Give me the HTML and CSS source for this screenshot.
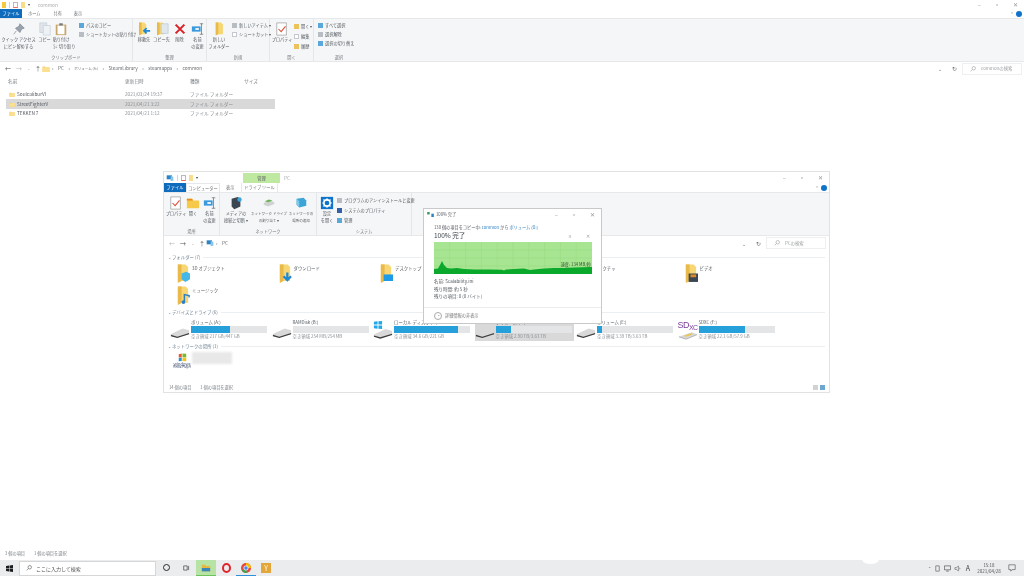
FILE: index.html
```html
<!DOCTYPE html>
<html lang="ja">
<head>
    <meta charset="UTF-8">
    <title>common</title>
    <link rel="stylesheet" href="styles.css">
</head>
<body>
    <svg class="defs" width="0" height="0">
        <symbol id="folder" viewBox="0 0 16 16"><path d="M1 3h5l1 1.500h8V14H1z" fill="#f5cf6b"/><path d="M1 5h6l1-1h7v10H1z" fill="#fbe08f"/></symbol>
        <symbol id="tall" viewBox="0 0 16 20"><path d="M3 0h8l3 3v15H3z" fill="#f7d774"/><path d="M3 0h4v18l-4 2z" fill="#e9b949"/></symbol>
        <symbol id="drive" viewBox="0 0 22 12"><path d="M1 7 14 1l7 2v4L8 11 1 9z" fill="#d9d9d9"/><path d="M1 8l7 2 13-4v1.500L8 11.500 1 9.500z" fill="#3d3d3d"/></symbol>
        <symbol id="copy" viewBox="0 0 16 16"><path d="M2 1h8v11H2z" fill="#dfe5ea" stroke="#b9c6d1" stroke-width=".6"/><path d="M6 4h8v11H6z" fill="#eef2f5" stroke="#b9c6d1" stroke-width=".6"/></symbol>
        <symbol id="check" viewBox="0 0 16 16"><path d="M2 1h11v14H2z" fill="#fff" stroke="#999" stroke-width=".8"/><path d="M4 8l3 3 5-6" fill="none" stroke="#e0503a" stroke-width="1.200"/></symbol>
        <symbol id="rename" viewBox="0 0 16 16"><path d="M1 5h10v6H1z" fill="#3a9bdc"/><path d="M5 7h4v2H5z" fill="#fff"/><path d="M12 2v12M10 2h4M10 14h4" stroke="#666" fill="none" stroke-width=".8"/></symbol>
        <symbol id="harddisk-net" viewBox="0 0 16 16"><path d="M2 8l7-3 5 2v2l-7 3-5-2z" fill="#cfd3d0"/><path d="M3 6l5-2 4 1-5 2z" fill="#6fb35a"/></symbol>
        <symbol id="netplace" viewBox="0 0 16 16"><path d="M3 3l8-1 3 3v6l-8 2-3-3z" fill="#3da4d8"/><path d="M3 3l3 3v7l-3-3z" fill="#7cc8ea"/></symbol>
        <symbol id="pc" viewBox="0 0 12 12"><path d="M1 2h8v6H1z" fill="#2b83c6"/><path d="M7 3l4 1v6l-4 1z" fill="#8bc6ea"/></symbol>
        <symbol id="lens" viewBox="0 0 8 8"><circle cx="5" cy="3" r="2.300" fill="none" stroke="currentColor" stroke-width=".8"/><path d="M3.300 4.700.8 7.200" stroke="currentColor" stroke-width=".8"/></symbol>
    </svg>

    <div class="screen">
        <!-- 後ろのウィンドウ -->
        <main class="window-main">
            <div class="title-row">
                <div class="quick-icons">
                    <span class="q-folder"></span><span class="q-sep"></span><span class="q-note"></span><span class="q-folder light"></span><span class="q-down">▾</span>
                </div>
                <span class="title-text">common</span>
                <div class="win-controls">
                    <span>–</span><span>▫</span><span>✕</span>
                </div>
            </div>
            <div class="tab-row">
                <span class="tab file">ファイル</span>
                <span class="tab home">ホーム</span>
                <span class="tab share">共有</span>
                <span class="tab view">表示</span>
                <div class="help"><span class="caret">⌃</span><span class="help-dot"></span></div>
            </div>
            <div class="ribbon">
                <section class="group g-clip">
                    <div class="group-body">
                        <div class="big"><svg class="ico16" viewBox="0 0 16 16"><path d="M9 2l5 5-3 1-2 4-5-5 4-2zM5 10l-3 4" fill="#9aa4ad" stroke="#7d8790" stroke-width=".8"/></svg><p>クイック アクセス<br>にピン留めする</p></div>
                        <div class="big"><svg class="ico16"><use href="#copy"/></svg><p>コピー</p></div>
                        <div class="big"><svg class="ico16" viewBox="0 0 16 16"><path d="M2 3h12v12H2z" fill="#c9a56a"/><path d="M4 4h8v10H4z" fill="#fff"/><path d="M6 1.500h4V4H6z" fill="#777"/></svg><p>貼り付け<br><span class="cut">✂ 切り取り</span></p></div>
                        <ul class="small-list">
                            <li><i class="mini blue"></i>パスのコピー</li>
                            <li><i class="mini grey"></i>ショートカットの貼り付け</li>
                        </ul>
                    </div>
                    <h4>クリップボード</h4>
                </section>
                <section class="group g-org">
                    <div class="group-body">
                        <div class="big"><svg class="ico16" viewBox="0 0 16 16"><use href="#tall" width="12" height="16"/><path d="M15 10H8M11 7l-3 3 3 3" stroke="#1e88d8" stroke-width="2" fill="none"/></svg><p>移動先</p></div>
                        <div class="big"><svg class="ico16" viewBox="0 0 16 16"><use href="#tall" width="12" height="16"/><path d="M7 2h8v11H7z" fill="#dfe8ef" stroke="#a9bccb" stroke-width=".6"/></svg><p>コピー先</p></div>
                        <div class="big"><svg class="ico16" viewBox="0 0 16 16"><path d="M3 3l10 10M13 3L3 13" stroke="#d8232a" stroke-width="2.400"/></svg><p>削除</p></div>
                        <div class="big"><svg class="ico16"><use href="#rename"/></svg><p>名前<br>の変更</p></div>
                    </div>
                    <h4>整理</h4>
                </section>
                <section class="group g-new">
                    <div class="group-body">
                        <div class="big"><svg class="ico16" viewBox="0 0 16 16"><use href="#tall" x="2" width="12" height="16"/></svg><p>新しい<br>フォルダー</p></div>
                        <ul class="small-list">
                            <li><i class="mini grey"></i>新しいアイテム ▾</li>
                            <li><i class="mini white"></i>ショートカット ▾</li>
                        </ul>
                    </div>
                    <h4>新規</h4>
                </section>
                <section class="group g-open">
                    <div class="group-body">
                        <div class="big"><svg class="ico16"><use href="#check"/></svg><p>プロパティ</p></div>
                        <ul class="small-list tall">
                            <li><i class="mini yellow"></i>開く ▾</li>
                            <li><i class="mini white"></i>編集</li>
                            <li><i class="mini yellow"></i>履歴</li>
                        </ul>
                    </div>
                    <h4>開く</h4>
                </section>
                <section class="group g-sel">
                    <div class="group-body">
                        <ul class="small-list">
                            <li><i class="mini blue"></i>すべて選択</li>
                            <li><i class="mini grey"></i>選択解除</li>
                            <li><i class="mini blue"></i>選択の切り替え</li>
                        </ul>
                    </div>
                    <h4>選択</h4>
                </section>
            </div>
            <div class="address">
                <div class="nav"><span>←</span><span class="off">→</span><span class="off tiny">⌄</span><span>↑</span></div>
                <svg class="ico8"><use href="#folder"/></svg>
                <div class="crumbs">
                    <span>›</span><span>PC</span><span>›</span><span class="crumb-jp">ボリューム (A:)</span><span>›</span><span>SteamLibrary</span><span>›</span><span>steamapps</span><span>›</span><span>common</span>
                </div>
                <span class="addr-drop">⌄</span>
                <span class="addr-refresh">↻</span>
                <div class="search-box"><svg class="lens"><use href="#lens"/></svg>commonの検索</div>
            </div>
            <div class="file-list">
                <div class="file-row head"><span>名前</span><span>更新日時</span><span>種類</span><span>サイズ</span></div>
                <div class="file-row"><span class="fname"><svg class="ico6"><use href="#folder"/></svg>SoulcaliburVI</span><span class="dim">2021/03/24 19:37</span><span class="dim">ファイル フォルダー</span></div>
                <div class="file-row selected"><span class="fname"><svg class="ico6"><use href="#folder"/></svg>StreetFighterV</span><span class="dim">2021/04/21 3:22</span><span class="dim">ファイル フォルダー</span></div>
                <div class="file-row"><span class="fname"><svg class="ico6"><use href="#folder"/></svg>TEKKEN 7</span><span class="dim">2021/04/21 1:12</span><span class="dim">ファイル フォルダー</span></div>
            </div>
            <div class="status-main">3 個の項目<span>1 個の項目を選択</span></div>
        </main>

        <!-- PC ウィンドウ -->
        <div class="window-pc">
            <div class="title-row pc-title">
                <div class="quick-icons">
                    <svg class="ico8"><use href="#pc"/></svg><span class="q-sep"></span><span class="q-note"></span><span class="q-folder light"></span><span class="q-down">▾</span>
                </div>
                <span class="manage">管理</span>
                <span class="title-text">PC</span>
                <div class="win-controls pc-controls">
                    <span>–</span><span>▫</span><span>✕</span>
                </div>
            </div>
            <div class="tab-row pc-tabs">
                <span class="tab file">ファイル</span>
                <span class="tab active">コンピューター</span>
                <span class="tab">表示</span>
                <span class="tab drive-tool">ドライブ ツール</span>
                <div class="help"><span class="caret">⌃</span><span class="help-dot"></span></div>
            </div>
            <div class="ribbon pc-ribbon">
                <section class="group g-place">
                    <div class="group-body">
                        <div class="big"><svg class="ico16"><use href="#check"/></svg><p>プロパティ</p></div>
                        <div class="big"><svg class="ico16" viewBox="0 0 16 16"><path d="M1 3h6l1 2h7v9H1z" fill="#f7c948"/><path d="M1 3h6l1 2H1z" fill="#e88a1a"/></svg><p>開く</p></div>
                        <div class="big"><svg class="ico16"><use href="#rename"/></svg><p>名前<br>の変更</p></div>
                    </div>
                    <h4>場所</h4>
                </section>
                <section class="group g-net">
                    <div class="group-body">
                        <div class="big"><svg class="ico16" viewBox="0 0 16 16"><path d="M3 3l7-2 3 2v9l-7 3-3-3z" fill="#3b4650"/><circle cx="12" cy="4" r="2.500" fill="#3da4d8"/></svg><p>メディアの<br>接続と切断 ▾</p></div>
                        <div class="big tight"><svg class="ico16"><use href="#harddisk-net"/></svg><p>ネットワーク ドライブ<br>の割り当て ▾</p></div>
                        <div class="big tight"><svg class="ico16"><use href="#netplace"/></svg><p>ネットワークの<br>場所の追加</p></div>
                    </div>
                    <h4>ネットワーク</h4>
                </section>
                <section class="group g-sys">
                    <div class="group-body">
                        <div class="big"><svg class="ico16" viewBox="0 0 16 16"><path d="M1 1h14v14H1z" fill="#0f74c9"/><circle cx="8" cy="8" r="3.600" fill="none" stroke="#fff" stroke-width="1.800"/><path d="M8 2.500v2M8 11.500v2M2.500 8h2M11.500 8h2M4 4l1.400 1.400M10.600 10.600L12 12M12 4l-1.400 1.400M5.400 10.600L4 12" stroke="#fff" stroke-width="1.300"/></svg><p>設定<br>を開く</p></div>
                        <ul class="small-list tall">
                            <li><i class="mini grey"></i>プログラムのアンインストールと変更</li>
                            <li><i class="mini navy"></i>システムのプロパティ</li>
                            <li><i class="mini blue"></i>管理</li>
                        </ul>
                    </div>
                    <h4>システム</h4>
                </section>
            </div>
            <div class="address pc-address">
                <div class="nav"><span class="off">←</span><span>→</span><span class="off tiny">⌄</span><span>↑</span></div>
                <svg class="ico8"><use href="#pc"/></svg>
                <div class="crumbs"><span>›</span><span>PC</span></div>
                <span class="addr-drop">⌄</span>
                <span class="addr-refresh">↻</span>
                <div class="search-box pc-search"><svg class="lens"><use href="#lens"/></svg>PCの検索</div>
            </div>
            <div class="pc-content">
                <div class="section-head"><span>⌄ フォルダー (7)</span></div>
                <div class="tile-grid folders">
                    <div class="folder-tile"><svg class="ico-tall" viewBox="0 0 16 20"><use href="#tall"/><path d="M7 10l5-2 4 2v6l-5 3-4-3z" fill="#43b7e6"/></svg><span>3D オブジェクト</span></div>
                    <div class="folder-tile"><svg class="ico-tall" viewBox="0 0 16 20"><use href="#tall"/><path d="M11 9v6M7 13l4 4 4-4" stroke="#1e88d8" stroke-width="2.400" fill="none"/></svg><span>ダウンロード</span></div>
                    <div class="folder-tile"><svg class="ico-tall" viewBox="0 0 16 20"><use href="#tall"/><path d="M6 11h10v7H6z" fill="#1e9be8"/></svg><span>デスクトップ</span></div>
                    <div class="folder-tile"><svg class="ico-tall" viewBox="0 0 16 20"><use href="#tall"/></svg><span>ドキュメント</span></div>
                    <div class="folder-tile"><svg class="ico-tall" viewBox="0 0 16 20"><use href="#tall"/></svg><span>ピクチャ</span></div>
                    <div class="folder-tile"><svg class="ico-tall" viewBox="0 0 16 20"><use href="#tall"/><path d="M6 10h10v9H6z" fill="#3a4652"/><path d="M8 11h6v3H8z" fill="#d98a2b"/></svg><span>ビデオ</span></div>
                    <div class="folder-tile"><svg class="ico-tall" viewBox="0 0 16 20"><use href="#tall"/><path d="M10 17V9l5 1v2" stroke="#2c7fc4" stroke-width="1.600" fill="none"/><circle cx="9" cy="17" r="2" fill="#2c7fc4"/></svg><span>ミュージック</span></div>
                </div>
                <div class="section-head"><span>⌄ デバイスとドライブ (6)</span></div>
                <div class="tile-grid drives">
                    <div class="drive-tile">
                        <svg class="ico-drive"><use href="#drive"/></svg>
                        <div class="drive-info"><span>ボリューム (A:)</span><div class="bar"><div class="fill" style="width:51%"></div></div><span class="dim">空き領域 217 GB/447 GB</span></div>
                    </div>
                    <div class="drive-tile">
                        <svg class="ico-drive"><use href="#drive"/></svg>
                        <div class="drive-info"><span>RAMDisk (B:)</span><div class="bar"><div class="fill" style="width:0%"></div></div><span class="dim">空き領域 254 MB/254 MB</span></div>
                    </div>
                    <div class="drive-tile">
                        <svg class="ico-drive winlogo" viewBox="0 0 22 20"><path d="M1 1l4-.6V4H1zM6 .3 10 0v4H6zM1 5h4v3.500L1 8zM6 5h4v4l-4-.5z" fill="#22a7e8"/><use href="#drive" y="8" width="22" height="12"/></svg>
                        <div class="drive-info"><span>ローカル ディスク (C:)</span><div class="bar"><div class="fill" style="width:84%"></div></div><span class="dim">空き領域 34.6 GB/221 GB</span></div>
                    </div>
                    <div class="drive-tile picked">
                        <svg class="ico-drive"><use href="#drive"/></svg>
                        <div class="drive-info"><span>ボリューム (D:)</span><div class="bar"><div class="fill" style="width:20%"></div></div><span class="dim">空き領域 2.90 TB/3.63 TB</span></div>
                    </div>
                    <div class="drive-tile">
                        <svg class="ico-drive"><use href="#drive"/></svg>
                        <div class="drive-info"><span>ボリューム (E:)</span><div class="bar"><div class="fill" style="width:7%"></div></div><span class="dim">空き領域 3.39 TB/3.63 TB</span></div>
                    </div>
                    <div class="drive-tile">
                        <div class="sdxc"><b>SD<small>XC</small></b><svg class="sd-card" viewBox="0 0 22 9"><path d="M1 6l14-5 6 2-12 5z" fill="#d5d9dd"/><path d="M6 5l8-3 3 1-8 3z" fill="#e8c659"/><path d="M1 6l8 2.500 12-5" stroke="#777" stroke-width=".6" fill="none"/></svg></div>
                        <div class="drive-info"><span>SDXC (F:)</span><div class="bar"><div class="fill" style="width:61%"></div></div><span class="dim">空き領域 22.1 GB/57.9 GB</span></div>
                    </div>
                </div>
                <div class="section-head"><span>⌄ ネットワークの場所 (1)</span></div>
                <div class="net-item">
                    <div class="media-logo"><svg viewBox="0 0 12 11" class="flag"><path d="M1 1l4-1v5l-4 .5z" fill="#e8542c"/><path d="M6 0l5 .5v5L6 5z" fill="#7cb82f"/><path d="M1 6l4-.5V10l-4 .5z" fill="#2b8fd8"/><path d="M6 5.500l5 .5v4.500L6 10z" fill="#f5c11d"/></svg><span>Windows</span><em>Media Player</em></div>
                    <div class="net-name"></div>
                </div>
            </div>
            <div class="status-pc">
                <span>14 個の項目</span><span>1 個の項目を選択</span>
                <div class="view-btns"><i class="vb list"></i><i class="vb tile"></i></div>
            </div>
        </div>

        <!-- コピーのダイアログ -->
        <div class="dialog">
            <div class="dlg-title">
                <svg class="dlg-icon" viewBox="0 0 8 6"><path d="M0 0h3v3H0z" fill="#3c9a5f"/><path d="M5 2h3v4H5z" fill="#2b83c6"/></svg>
                <span>100% 完了</span>
                <div class="dlg-controls"><span>–</span><span>▫</span><span>✕</span></div>
            </div>
            <p class="dlg-line">130 個の項目をコピー中: <a>common</a> から <a>ボリューム (D:)</a></p>
            <div class="dlg-progress">
                <span>100% 完了</span>
                <div class="dlg-actions"><span>ıı</span><span>✕</span></div>
            </div>
            <div class="graph">
                <svg viewBox="0 0 158 32" width="158" height="32">
                    <rect width="158" height="32" fill="#a8e592"/>
                    <path d="M15.800 0v32M31.600 0v32M47.400 0v32M63.200 0v32M79 0v32M94.800 0v32M110.600 0v32M126.400 0v32M142.200 0v32M0 8h158M0 16h158M0 24h158" stroke="#95da7e" stroke-width=".5"/>
                    <path d="M0 32V27L4 26.500 6 23 8 19 10 23 13 26 17 26.500 23 26 30 27 40 27.500 55 27.500 68 27.800 70 28.500 72 27.500 80 27 90 26.500 96 28 100 27.500 110 26.500 120 26 130 26 140 25.500 158 25V32z" fill="#0aa82b"/>
                </svg>
                <span class="speed">速度: 134 MB/秒</span>
            </div>
            <ul class="dlg-details">
                <li>名前: Scalability.ini</li>
                <li>残り時間: 約 5 秒</li>
                <li>残りの項目: 0 (0 バイト)</li>
            </ul>
            <div class="dlg-footer"><span class="circle">⌃</span>詳細情報の非表示</div>
        </div>

        <div class="bump"></div>

        <!-- タスクバー -->
        <footer class="taskbar">
            <svg class="start" viewBox="0 0 10 10"><path d="M0 1.300 4.300.7v3.900H0zM5 .6 10 0v4.600H5zM0 5.300h4.300v3.900L0 8.700zM5 5.300h5V10l-5-.7z" fill="#1c1c1c"/></svg>
            <div class="task-search"><svg class="lens"><use href="#lens"/></svg>ここに入力して検索</div>
            <div class="task-icons">
                <div class="task-btn"><span class="cortana"></span></div>
                <div class="task-btn"><svg class="tv" viewBox="0 0 10 8"><path d="M1 1h5v6H1zM8 1v6" fill="none" stroke="#333" stroke-width=".9"/></svg></div>
                <div class="task-btn running"><svg class="app" viewBox="0 0 12 10"><path d="M1 1h4l1 1.500h5V9H1z" fill="#e8b73e"/><path d="M1 5h10v4H1z" fill="#3c86b8"/></svg></div>
                <div class="task-btn"><span class="opera"></span></div>
                <div class="task-btn used"><svg class="app" viewBox="0 0 12 12"><circle cx="6" cy="6" r="6" fill="#e8453c"/><path d="M6 6 1 9a6 6 0 0 0 6 3z" fill="#34a853"/><path d="M6 0a6 6 0 0 1 6 6H6z" fill="#fbbc05"/><circle cx="6" cy="6" r="2.600" fill="#4285f4" stroke="#fff" stroke-width=".9"/></svg></div>
                <div class="task-btn"><span class="yellow-app">Y</span></div>
            </div>
            <div class="tray">
                <span>⌃</span>
                <svg class="tray-ico" viewBox="0 0 8 8"><path d="M2 1h4v6H2z" fill="none" stroke="#666" stroke-width=".8"/></svg>
                <svg class="tray-ico" viewBox="0 0 8 8"><path d="M.5 1h7v4.500h-7zM2.500 7h3" fill="none" stroke="#555" stroke-width=".8"/></svg>
                <svg class="tray-ico" viewBox="0 0 8 8"><path d="M1 3h2l2-2v6L3 5H1zM6 3c1 .6 1 1.400 0 2" fill="none" stroke="#666" stroke-width=".7"/></svg>
                <span class="ime">A</span>
                <div class="clock"><span>15:18</span><span>2021/04/28</span></div>
                <svg class="notify" viewBox="0 0 10 10"><path d="M1 1h8v6H5L3.500 9V7H1z" fill="none" stroke="#555" stroke-width=".8"/></svg>
            </div>
        </footer>
    </div>
</body>
</html>
```
FILE: styles.css
```css
* {
    margin: 0;
    padding: 0;
    box-sizing: border-box;
}

html, body {
    width: 1024px;
    height: 576px;
    overflow: hidden;
    background-color: #ffffff;
}

body {
    color: #555b61;
    font-family: "Noto Sans CJK JP", "Noto Sans", sans-serif;
    font-size: 4.200px;
    line-height: 7px;
}

ul {
    list-style: none;
}

.defs {
    position: absolute;
}

.screen {
    position: relative;
    width: 1024px;
    height: 576px;
    display: flex;
    flex-direction: column;
    filter: blur(0.4px);
}

.dim {
    color: #8a8f94;
}

.ico16 {
    width: 14px;
    height: 14px;
    display: block;
}

.ico8 {
    width: 8px;
    height: 8px;
    flex: none;
}

.ico6 {
    width: 6px;
    height: 7px;
    flex: none;
}

.lens {
    width: 6px;
    height: 6px;
    flex: none;
}

/* 後ろのウィンドウ */
.window-main {
    flex: 1;
    display: flex;
    flex-direction: column;
}

.title-row {
    height: 9px;
    display: flex;
    align-items: center;
    padding-left: 2px;
    flex: none;
}

.quick-icons {
    display: flex;
    align-items: center;
    gap: 3px;
    width: 36px;
}

.q-folder {
    width: 4px;
    height: 6px;
    background-color: #f5c83f;
}

.q-folder.light {
    background-color: #f8de8c;
}

.q-sep {
    width: 1px;
    height: 6px;
    background-color: #d5d5d5;
}

.q-note {
    width: 5px;
    height: 6px;
    border: 1px solid #b9b9b9;
    border-bottom-color: #e0705a;
}

.q-down {
    font-size: 4px;
    color: #444;
}

.title-text {
    color: #a9adb1;
    font-size: 4.800px;
}

.win-controls {
    margin-left: auto;
    display: flex;
    gap: 13px;
    padding-right: 6px;
    font-size: 6px;
    color: #9a9a9a;
}

.tab-row {
    height: 9px;
    display: flex;
    align-items: center;
    flex: none;
    position: relative;
    color: #6a6f74;
}

.tab {
    height: 9px;
    line-height: 9px;
}

.tab.file {
    width: 22px;
    background-color: #0f6cbd;
    color: #ffffff;
    text-align: center;
}

.tab.home {
    margin-left: 6px;
}

.tab.share {
    margin-left: 13px;
}

.tab.view {
    margin-left: 12px;
}

.help {
    margin-left: auto;
    display: flex;
    align-items: center;
    gap: 2px;
    padding-right: 2px;
}

.caret {
    font-size: 5px;
    color: #999;
}

.help-dot {
    width: 6px;
    height: 6px;
    border-radius: 50%;
    background-color: #0f74c9;
}

.ribbon {
    height: 44px;
    flex: none;
    display: flex;
    background-color: #f5f6f7;
    border-top: 1px solid #e6e8ea;
    border-bottom: 1px solid #e6e8ea;
}

.group {
    display: flex;
    flex-direction: column;
    height: 100%;
    border-right: 1px solid #e4e6e8;
}

.group-body {
    flex: 1;
    display: grid;
    padding-top: 3px;
    align-items: start;
}

.group h4 {
    font-weight: 400;
    font-size: 4.200px;
    text-align: center;
    color: #777c81;
    height: 7px;
    line-height: 6px;
}

.big {
    display: flex;
    flex-direction: column;
    align-items: center;
    white-space: nowrap;
    text-align: center;
}

.big p {
    line-height: 7px;
}

.big.tight {
    font-size: 3.500px;
}

.cut {
    margin-left: 7px;
}

.small-list {
    margin-top: -1px;
}

.small-list li {
    display: flex;
    align-items: center;
    gap: 2px;
    height: 9px;
    white-space: nowrap;
}

.small-list.tall li {
    height: 10px;
}

.mini {
    width: 5px;
    height: 5px;
    flex: none;
}

.mini.blue {
    background-color: #5aa7dc;
}

.mini.grey {
    background-color: #b7bdc2;
}

.mini.white {
    background-color: #ffffff;
    border: 1px solid #c2c8cd;
}

.mini.yellow {
    background-color: #ecc35a;
}

.mini.navy {
    background-color: #3560a8;
}

.g-clip {
    width: 133px;
}

.g-clip .group-body {
    grid-template-columns: 35px 17px 16px 1fr;
    padding-left: 1px;
}

.g-clip .small-list {
    padding-left: 10px;
}

.g-org {
    width: 74px;
}

.g-org .group-body {
    grid-template-columns: 18px 17px 19px 17px;
    padding-left: 2px;
}

.g-new {
    width: 63px;
}

.g-new .group-body {
    grid-template-columns: 24px 1fr;
}

.g-new .small-list {
    padding-left: 1px;
}

.g-open {
    width: 44px;
}

.g-open .group-body {
    grid-template-columns: 24px 1fr;
}

.g-sel {
    width: 50px;
    border-right: none;
}

.g-sel .small-list {
    padding-left: 4px;
}

.address {
    height: 13px;
    flex: none;
    display: flex;
    align-items: center;
    color: #666b70;
    padding-left: 5px;
    font-size: 4.700px;
}

.nav {
    display: flex;
    width: 37px;
    font-size: 6px;
    color: #555;
    gap: 5px;
}

.nav .off {
    color: #b5b5b5;
}

.nav .tiny {
    font-size: 4px;
}

.crumbs {
    display: flex;
    gap: 4.500px;
    margin-left: 2px;
}

.crumb-jp {
    font-size: 3.500px;
}

.addr-drop {
    margin-left: auto;
    font-size: 5px;
    width: 14px;
}

.addr-refresh {
    font-size: 6px;
    width: 10px;
}

.search-box {
    width: 60px;
    height: 12px;
    margin-right: 2px;
    border: 1px solid #edeff0;
    display: flex;
    align-items: center;
    gap: 5px;
    padding-left: 7px;
    color: #9a9ea2;
    font-size: 4.400px;
}

.file-list {
    flex: 1;
    padding: 1px 0 0 6px;
    font-size: 4.700px;
}

.file-row {
    display: grid;
    grid-template-columns: 119px 65px 54px 31px;
    width: 269px;
    height: 9px;
    align-items: center;
    white-space: nowrap;
}

.file-row.head {
    height: 10px;
    margin-bottom: 4px;
    color: #7b8086;
}

.file-row.head span:first-child {
    padding-left: 2px;
}

.file-row.selected {
    background-color: #d9d9d9;
    height: 10px;
}

.fname {
    display: flex;
    align-items: center;
    gap: 2px;
    padding-left: 3px;
}

.status-main {
    height: 7px;
    flex: none;
    padding-left: 5px;
    margin-bottom: 3px;
    color: #7b8086;
}

.status-main span {
    margin-left: 9px;
}

/* PC ウィンドウ */
.window-pc {
    position: absolute;
    left: 163px;
    top: 171px;
    width: 667px;
    height: 222px;
    background-color: #ffffff;
    border: 1px solid #e2e2e2;
    display: flex;
    flex-direction: column;
}

.pc-title {
    height: 11px;
}

.pc-title .quick-icons {
    width: 77px;
}

.manage {
    width: 37px;
    height: 10px;
    background-color: #bfe8a0;
    text-align: center;
    line-height: 10px;
    margin-right: 4px;
}

.pc-controls {
    gap: 13px;
    padding-right: 6px;
}

.pc-tabs .tab.active {
    width: 34px;
    text-align: center;
    background-color: #ffffff;
    border: 1px solid #e6e8ea;
    border-bottom: none;
}

.pc-tabs .tab:nth-child(3) {
    margin-left: 6px;
    width: 11px;
}

.pc-tabs .drive-tool {
    margin-left: 4px;
    width: 37px;
    text-align: center;
    border: 1px solid #e6e8ea;
    border-top: none;
    border-bottom: none;
}

.pc-ribbon {
    height: 44px;
}

.g-place {
    width: 56px;
}

.g-place .group-body {
    grid-template-columns: 18px 16px 17px;
    padding-left: 3px;
}

.g-net {
    width: 97px;
}

.g-net .group-body {
    grid-template-columns: 32px 34px 30px;
}

.g-sys {
    width: 95px;
}

.g-sys .group-body {
    grid-template-columns: 20px 1fr;
}

.pc-address {
    padding-left: 5px;
    height: 14px;
}

.pc-search {
    width: 60px;
    margin-right: 3px;
}

.pc-content {
    flex: 1;
    padding-top: 3px;
    font-size: 4.400px;
}

.section-head {
    display: flex;
    align-items: center;
    gap: 3px;
    height: 8px;
    padding: 0 4px;
    color: #6d7f90;
}

.section-head::after {
    content: "";
    flex: 1;
    height: 1px;
    background-color: #eceff1;
}

.tile-grid {
    display: grid;
    grid-template-columns: repeat(6, 101.500px);
    padding-left: 6px;
}

.folders {
    grid-auto-rows: 22px;
    padding-top: 3px;
}

.folder-tile {
    display: flex;
    gap: 2px;
    padding-left: 5px;
    align-items: flex-start;
}

.ico-tall {
    width: 15px;
    height: 19px;
    flex: none;
}

.folder-tile span {
    margin-top: 1px;
}

.drives {
    height: 26px;
    padding-top: 2px;
}

.drive-tile {
    display: flex;
    align-items: center;
    gap: 1px;
    height: 23px;
}

.drive-tile.picked {
    background-color: #d9d9d9;
    width: 99px;
}

.ico-drive {
    width: 20px;
    height: 12px;
    flex: none;
    margin-top: 6px;
}

.ico-drive.winlogo {
    height: 20px;
    margin-top: 0;
}

.drive-info {
    flex: none;
    width: 77px;
    display: flex;
    flex-direction: column;
    white-space: nowrap;
}

.bar {
    width: 76px;
    height: 7px;
    background-color: #e4e5e6;
}

.fill {
    height: 100%;
    background-color: #26a0da;
}

.sdxc {
    width: 20px;
    flex: none;
    display: flex;
    flex-direction: column;
    align-items: center;
    white-space: nowrap;
}

.sdxc b {
    color: #7b3f98;
    font-family: "Liberation Sans", sans-serif;
    font-weight: 400;
    font-size: 9px;
    line-height: 10px;
    letter-spacing: -0.5px;
}

.sdxc small {
    font-size: 7px;
    position: relative;
    top: 2px;
}

.sd-card {
    width: 20px;
    height: 9px;
}

.net-item {
    display: flex;
    padding: 1px 0 0 8px;
}

.media-logo {
    width: 20px;
    display: flex;
    flex-direction: column;
    align-items: center;
    font-size: 4px;
    line-height: 4px;
    color: #3b4a6b;
    padding-top: 2px;
}

.media-logo em {
    font-style: normal;
    font-size: 3px;
    line-height: 3px;
}

.flag {
    width: 9px;
    height: 9px;
}

.net-name {
    width: 40px;
    height: 12px;
    margin-top: 1px;
    background-color: #e8e8e8;
    filter: blur(1px);
}

.status-pc {
    height: 10px;
    flex: none;
    display: flex;
    align-items: center;
    gap: 9px;
    padding-left: 5px;
    color: #7b8086;
}

.view-btns {
    margin-left: auto;
    display: flex;
    gap: 2px;
    padding-right: 4px;
}

.vb {
    width: 5px;
    height: 5px;
    display: block;
}

.vb.list {
    background-color: #d0d3d5;
}

.vb.tile {
    background-color: #6da6cf;
}

/* コピーのダイアログ */
.dialog {
    position: absolute;
    left: 423px;
    top: 208px;
    width: 179px;
    height: 116px;
    background-color: #ffffff;
    border: 1px solid #c9c9c9;
    padding: 0 10px;
    display: flex;
    flex-direction: column;
}

.dlg-title {
    height: 11px;
    margin: 0 -7px;
    display: flex;
    align-items: center;
    gap: 2px;
}

.dlg-icon {
    width: 7px;
    height: 5px;
}

.dlg-controls {
    margin-left: auto;
    display: flex;
    gap: 13px;
    font-size: 6px;
    color: #999;
    padding-right: 3px;
}

.dlg-line {
    margin-top: 4px;
    white-space: nowrap;
}

.dlg-line a {
    color: #2f7fc2;
}

.dlg-progress {
    display: flex;
    align-items: center;
    font-size: 6.500px;
    line-height: 9px;
    color: #3f4448;
}

.dlg-actions {
    margin-left: auto;
    display: flex;
    gap: 15px;
    font-size: 5px;
    color: #a5a5a5;
    padding-right: 1px;
}

.graph {
    position: relative;
    width: 158px;
    height: 32px;
    margin-top: 2px;
    flex: none;
}

.graph svg {
    display: block;
}

.speed {
    position: absolute;
    right: 1px;
    top: 19px;
    color: #2f4a2f;
}

.dlg-details {
    margin-top: 4px;
    font-size: 4.500px;
}

.dlg-details li {
    height: 7.500px;
}

.dlg-footer {
    margin: 6px -10px 0;
    padding: 2px 0 0 10px;
    border-top: 1px solid #ededed;
    display: flex;
    align-items: center;
    gap: 3px;
    height: 15px;
    color: #777;
}

.circle {
    width: 8px;
    height: 8px;
    border: 1px solid #aaa;
    border-radius: 50%;
    font-size: 4px;
    line-height: 7px;
    text-align: center;
}

.bump {
    position: absolute;
    left: 862px;
    top: 555px;
    width: 17px;
    height: 9px;
    border-radius: 50%;
    background-color: #ffffff;
    z-index: 2;
}

/* タスクバー */
.taskbar {
    height: 16px;
    flex: none;
    display: flex;
    align-items: center;
    background-color: #eaecee;
    position: relative;
}

.start {
    width: 7px;
    height: 7px;
    margin-left: 6px;
}

.task-search {
    width: 137px;
    height: 15px;
    margin-left: 6px;
    background-color: #ffffff;
    border: 1px solid #d4d6d8;
    display: flex;
    align-items: center;
    gap: 4px;
    padding-left: 6px;
    font-size: 5px;
    color: #555;
}

.task-icons {
    display: flex;
    height: 16px;
}

.task-btn {
    width: 20px;
    display: flex;
    align-items: center;
    justify-content: center;
    border-bottom: 1px solid transparent;
}

.task-btn.running {
    background-color: #b7e4a5;
    border-bottom-color: #6ec25a;
}

.task-btn.used {
    border-bottom-color: #2f8fd8;
}

.cortana {
    width: 7px;
    height: 7px;
    border: 1px solid #2a2a2a;
    border-radius: 50%;
}

.tv {
    width: 7px;
    height: 6px;
}

.app {
    width: 10px;
    height: 10px;
}

.opera {
    width: 9px;
    height: 10px;
    border: 2px solid #e0242c;
    border-radius: 50%;
}

.yellow-app {
    width: 10px;
    height: 10px;
    background-color: #e3a63a;
    color: #fff6d8;
    font-size: 7px;
    line-height: 10px;
    text-align: center;
}

.tray {
    margin-left: auto;
    display: flex;
    align-items: center;
    color: #555;
    gap: 3px;
    padding-right: 8px;
}

.tray-ico {
    width: 7px;
    height: 7px;
}

.ime {
    font-size: 7px;
    margin: 0 3px 0 2px;
    color: #444;
}

.clock {
    display: flex;
    flex-direction: column;
    align-items: center;
    line-height: 6.500px;
    font-size: 4.500px;
    width: 26px;
    margin-right: 3px;
}

.notify {
    width: 8px;
    height: 8px;
}
```
